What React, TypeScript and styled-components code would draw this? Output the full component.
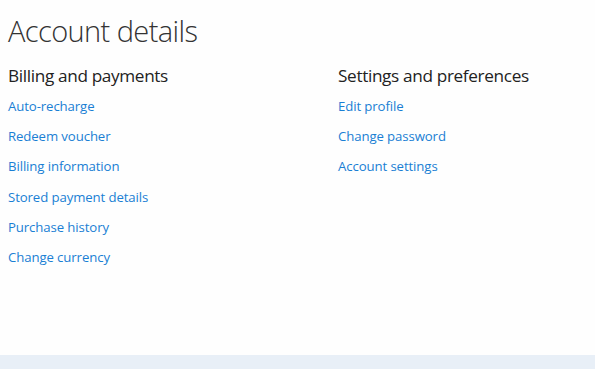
import React from "react";
import styled, { createGlobalStyle } from "styled-components";

const GlobalStyle = createGlobalStyle`
  html, body {
    margin: 0;
    padding: 0;
    background: #fefefe;
  }
  body {
    font-family: "Open Sans", "Noto Sans", sans-serif;
  }
`;

const sections = [
  {
    title: "Billing and payments",
    links: [
      "Auto-recharge",
      "Redeem voucher",
      "Billing information",
      "Stored payment details",
      "Purchase history",
      "Change currency",
    ],
  },
  {
    title: "Settings and preferences",
    links: ["Edit profile", "Change password", "Account settings"],
  },
];

const Page = styled.div`
  display: flex;
  flex-direction: column;
  min-height: 369px;
  width: 595px;
`;

const Main = styled.main`
  flex: 1;
  padding: 10px 8px 0 8px;
`;

const Title = styled.h1`
  margin: 0;
  font-size: 29px;
  font-weight: 300;
  color: #333;
  letter-spacing: -0.6px;
  line-height: 42px;
`;

const Columns = styled.div`
  display: grid;
  grid-template-columns: 330px 1fr;
  margin-top: 11px;
`;

const Heading = styled.h2`
  margin: 0 0 1px 0;
  font-size: 17.2px;
  font-weight: 400;
  color: #222;
  line-height: 26px;
  letter-spacing: -0.35px;
`;

const LinkList = styled.ul`
  list-style: none;
  margin: 0;
  padding: 0;
`;

const Item = styled.li`
  line-height: 30px;
  height: 30.2px;
`;

const Link = styled.a`
  color: #1a7fd4;
  font-size: 13.2px;
  text-decoration: none;
  letter-spacing: -0.1px;
  cursor: pointer;
`;

const Footer = styled.footer`
  height: 14px;
  background: #e8eff7;
`;

export default function App() {
  return (
    <Page>
      <GlobalStyle />
      <Main>
        <Title>Account details</Title>
        <Columns>
          {sections.map((s) => (
            <section key={s.title}>
              <Heading>{s.title}</Heading>
              <LinkList>
                {s.links.map((l) => (
                  <Item key={l}>
                    <Link href="#">{l}</Link>
                  </Item>
                ))}
              </LinkList>
            </section>
          ))}
        </Columns>
      </Main>
      <Footer />
    </Page>
  );
}
